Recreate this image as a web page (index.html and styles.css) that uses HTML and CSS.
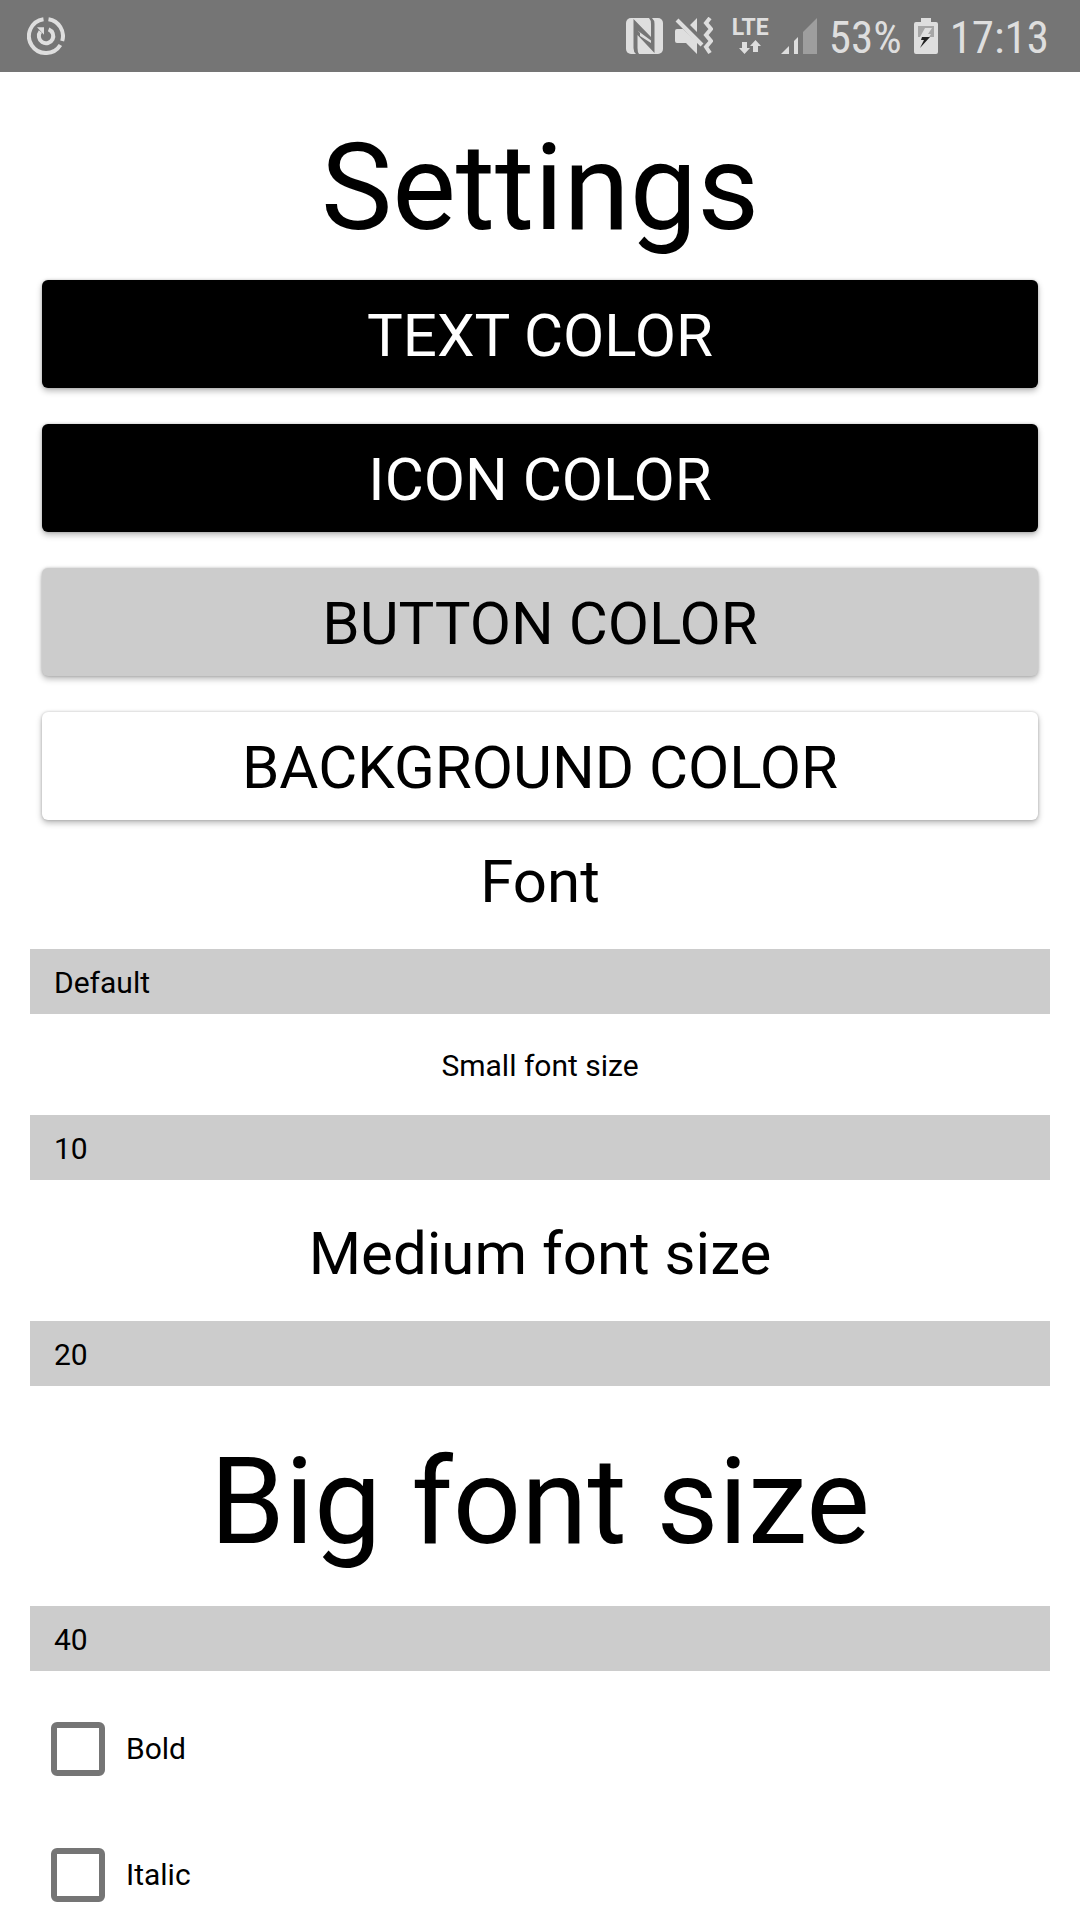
FILE: index.html
```html
<!DOCTYPE html>
<html lang="en">
<head>
<meta charset="utf-8">
<meta name="viewport" content="width=device-width, initial-scale=1">
<title>Settings</title>
<link rel="stylesheet" href="styles.css">
</head>
<body>
<header class="status">
  <svg class="sync" width="38" height="38" viewBox="0 0 38 38" fill="none" stroke="#dedede" stroke-width="4" aria-hidden="true">
    <path d="M21.5 2.2A17 17 0 0 1 35.2 24"/>
    <path d="M33.4 28A17 17 0 1 1 16.5 2.2"/>
    <path d="M21.6 12.3A7.2 7.2 0 1 1 13.4 14.6"/>
    <path d="M10 10.3h7v7.4z" fill="#dedede" stroke="none"/>
  </svg>
  <div class="indicators">
    <svg width="37" height="36" viewBox="0 0 37 36" aria-hidden="true">
      <rect width="37" height="36" rx="5" fill="#dedede"/>
      <path d="M7.500 1L25 19V6Q25 2 23 0H26Q28.500 2 28.500 6V35L11.500 17V30Q11.500 34 13 36H10Q7.500 34 7.500 30Z" fill="#757575"/>
      <path d="M11.500 12.500L14 15V18L25 25V22.500L13.500 14Z" fill="#dedede"/>
    </svg>
    <svg width="38" height="38" viewBox="0 0 38 38" aria-hidden="true">
      <path d="M0 14Q0 12 2 12H8L22 25V37L11 26H2Q0 26 0 24ZM22 1V15L15 8Z" fill="#dedede"/>
      <path d="M2 3L27 28" stroke="#dedede" stroke-width="4"/>
      <path d="M35 1L31 6L36 12L31 18L36 24L31 30L35 36" fill="none" stroke="#dedede" stroke-width="4"/>
    </svg>
    <div class="network">
      <span class="lte">LTE</span>
      <svg width="22" height="14" viewBox="0 0 22 14" fill="#dedede" aria-hidden="true">
        <path d="M3 2h5v6h3L5.500 14 0 8h3zM14 12h5V6h3L16.500 0 11 6h3z"/>
      </svg>
    </div>
    <svg width="36" height="36" viewBox="0 0 36 36" aria-hidden="true">
      <path d="M0 36L8 28V36ZM13 23L17 19V36H13Z" fill="#dedede"/>
      <path d="M22 14L36 0V36H22Z" fill="#9e9e9e"/>
    </svg>
    <span class="reading">53%</span>
    <svg width="24" height="36" viewBox="0 0 24 36" aria-hidden="true">
      <path d="M7 0H17V4H22Q24 4 24 6V34Q24 36 22 36H2Q0 36 0 34V6Q0 4 2 4H7Z" fill="#dedede"/>
      <path d="M4 8H20V19H4Z" fill="#a6a6a6"/>
      <path d="M11 10H18L14 16H17L15 19H6Z" fill="#dedede"/>
      <path d="M8 19H16L6 30L10 22H7Z" fill="#222"/>
    </svg>
    <time class="reading">17:13</time>
  </div>
</header>
<main class="settings">
  <h1 class="title">Settings</h1>
  <div class="colors">
    <button class="swatch dark" type="button">TEXT COLOR</button>
    <button class="swatch dark" type="button">ICON COLOR</button>
    <button class="swatch gray" type="button">BUTTON COLOR</button>
    <button class="swatch" type="button">BACKGROUND COLOR</button>
  </div>
  <label class="medium" for="font">Font</label>
  <select class="picker" id="font"><option>Default</option></select>
  <label class="small" for="small-size">Small font size</label>
  <select class="picker" id="small-size"><option>10</option></select>
  <label class="medium" for="medium-size">Medium font size</label>
  <select class="picker" id="medium-size"><option>20</option></select>
  <label class="big" for="big-size">Big font size</label>
  <select class="picker" id="big-size"><option>40</option></select>
  <div class="styles">
    <label class="check"><input type="checkbox">Bold</label>
    <label class="check"><input type="checkbox">Italic</label>
  </div>
</main>
</body>
</html>
```
FILE: styles.css
```css
* {
  box-sizing: border-box;
}

body {
  margin: 0;
  background: #fff;
  color: #000;
  font-family: Roboto, sans-serif;
  font-size: 30px;
  line-height: 40px;
}

.status {
  display: flex;
  justify-content: space-between;
  align-items: center;
  height: 72px;
  padding: 0 31px 0 27px;
  background: #757575;
  color: #dedede;
}

.status svg {
  display: block;
}

.indicators {
  display: flex;
  align-items: center;
  gap: 12px;
}

.network {
  display: flex;
  flex-direction: column;
  align-items: center;
  gap: 2px;
  padding: 0 0 0 7px;
}

.lte {
  font-size: 23px;
  font-weight: 700;
  line-height: 20px;
}

.reading {
  padding: 4px 0 0;
  font-family: "Roboto Condensed", Roboto, sans-serif;
  font-size: 45px;
  line-height: 54px;
}

.settings {
  display: flex;
  flex-direction: column;
  padding: 36px 30px 18px;
}

.title {
  margin: 0;
  font-size: 120px;
  font-weight: 400;
  line-height: 160px;
  text-align: center;
}

.colors {
  display: flex;
  flex-direction: column;
  gap: 36px;
  padding: 12px 12px 0;
}

.swatch {
  height: 108px;
  padding: 4px 0 0;
  border: 0;
  border-radius: 6px;
  background: #fff;
  box-shadow: 0 3px 6px rgba(0, 0, 0, 0.28), 0 0 3px rgba(0, 0, 0, 0.2);
  color: #000;
  font-family: inherit;
  font-size: 60px;
  line-height: 80px;
}

.swatch.dark {
  background: #000;
  color: #fff;
}

.swatch.gray {
  background: #ccc;
}

.small,
.medium,
.big {
  text-align: center;
}

.small {
  padding: 20px 0 29px;
}

.medium {
  padding: 22px 0 27px;
  font-size: 60px;
  line-height: 80px;
}

.big {
  padding: 24px 0;
  font-size: 120px;
  line-height: 160px;
}

.picker {
  appearance: none;
  height: 65px;
  margin: 0 0 12px;
  padding: 2px 24px 0;
  border: 0;
  border-radius: 0;
  background: #ccc;
  color: #000;
  font: inherit;
}

.styles {
  display: flex;
  flex-direction: column;
  align-items: flex-start;
  gap: 72px;
  padding: 39px 21px 0;
}

.check {
  display: flex;
  align-items: center;
  gap: 21px;
}

.check input {
  appearance: none;
  width: 54px;
  height: 54px;
  margin: 0;
  border: 6px solid #757575;
  border-radius: 6px;
}

.check input:checked {
  background: #757575;
}
```
